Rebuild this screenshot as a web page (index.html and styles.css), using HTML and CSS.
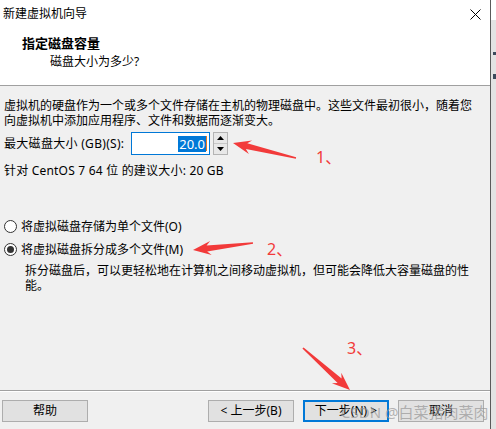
FILE: index.html
```html
<!DOCTYPE html>
<html lang="zh-CN">

<head>
    <meta charset="UTF-8">
    <title>新建虚拟机向导</title>
    <link rel="stylesheet" href="styles.css">
</head>

<body>
    <div class="window">
        <div class="dialog">
            <div class="header">
                <div class="titlebar">
                    <span>新建虚拟机向导</span>
                    <svg class="close" width="11" height="11" viewBox="0 0 11 11">
                        <path d="M0.5 0.5 L10.5 10.5 M10.5 0.5 L0.5 10.5" stroke="#000" stroke-width="1" fill="none"/>
                    </svg>
                </div>
                <div class="head-title">指定磁盘容量</div>
                <div class="head-sub">磁盘大小为多少?</div>
            </div>

            <div class="content">
                <p class="intro">虚拟机的硬盘作为一个或多个文件存储在主机的物理磁盘中。这些文件最初很小，随着您<br>向虚拟机中添加应用程序、文件和数据而逐渐变大。</p>

                <div class="size-row">
                    <label class="size-label">最大磁盘大小 (GB)(S):</label>
                    <div class="spin-input"><span class="sel">20.0</span><span class="caret"></span></div>
                    <div class="spin-btns">
                        <span class="spin-btn"><svg width="7" height="4" viewBox="0 0 7 4"><path d="M0 4 L3.5 0 L7 4 Z" fill="#000"/></svg></span>
                        <span class="spin-btn"><svg width="7" height="4" viewBox="0 0 7 4"><path d="M0 0 L3.5 4 L7 0 Z" fill="#000"/></svg></span>
                    </div>
                </div>

                <p class="hint">针对 CentOS 7 64 位 的建议大小: 20 GB</p>

                <div class="radio radio-first"><span class="circle"></span>将虚拟磁盘存储为单个文件(O)</div>
                <div class="radio radio-second"><span class="circle on"></span>将虚拟磁盘拆分成多个文件(M)</div>

                <p class="desc">拆分磁盘后，可以更轻松地在计算机之间移动虚拟机，但可能会降低大容量磁盘的性<br>能。</p>
            </div>

            <div class="footer">
                <button class="btn">帮助</button>
                <div class="spacer"></div>
                <button class="btn">&lt; 上一步(B)</button>
                <button class="btn btn-default">下一步(N) &gt;</button>
                <button class="btn">取消</button>
            </div>
        </div>
        <div class="edge">
            <div class="edge-top"></div>
            <div class="edge-mark"></div>
            <div class="edge-mark edge-mark-2"></div>
        </div>
    </div>

    <!-- red annotations drawn over the screenshot -->
    <svg class="marks" width="496" height="429" viewBox="0 0 496 429">
        <polygon points="233,143 252.1,140.4 247.3,143.3 296.1,157.3 295.9,158.7 245.9,149.1 248.9,154" fill="#f23a3a"/>
        <polygon points="193,250 210.1,240.9 206.6,245.4 252.9,242.3 253.1,243.7 207.2,251.4 211.7,254.9" fill="#f23a3a"/>
        <polygon points="350,390 341.3,372.8 341.6,378.5 303.6,347.4 302.4,348.6 337.6,382.9 331.9,383.2" fill="#f23a3a"/>
    </svg>
    <span class="num num-1">1、</span>
    <span class="num num-2">2、</span>
    <span class="num num-3">3、</span>
    <span class="watermark">CSDN @白菜猪肉菜肉</span>
</body>

</html>
```

FILE: styles.css
```css
body {
    margin: 0;
    width: 496px;
    height: 429px;
    overflow: hidden;
    position: relative;
    font-family: "Noto Sans", "Noto Sans CJK SC", sans-serif;
    font-size: 12px;
    color: #000;
    background-color: #f0f0f0;
}

.window {
    display: flex;
    height: 429px;
}

.dialog {
    width: 490px;
    border-right: 1px solid #5a5a5a;
    display: flex;
    flex-direction: column;
    background-color: #f0f0f0;
}

.header {
    height: 85px;
    background-color: #fff;
    border-bottom: 1px solid #a0a0a0;
}

.titlebar {
    display: flex;
    justify-content: space-between;
    align-items: center;
    height: 28px;
    padding: 0 9px 0 3px;
    line-height: 16px;
}

.head-title {
    font-weight: bold;
    font-size: 13px;
    line-height: 16px;
    margin: 7px 0 0 22px;
}

.head-sub {
    line-height: 16px;
    margin: 3px 0 0 50px;
}

.content {
    flex: 1;
    padding-left: 4px;
}

.intro {
    margin: 12px 0 0;
    line-height: 15px;
    white-space: nowrap;
}

.size-row {
    display: flex;
    align-items: center;
    height: 23px;
    margin-top: 4px;
}

.size-label {
    width: 127px;
    flex: none;
    line-height: 15px;
    letter-spacing: 0.3px;
}

.spin-input {
    width: 79px;
    height: 23px;
    box-sizing: border-box;
    border: 1px solid #0078d7;
    background-color: #fff;
    display: flex;
    justify-content: flex-end;
    align-items: center;
    padding-right: 2px;
}

.sel {
    background-color: #0078d7;
    color: #fff;
    font-size: 13px;
    line-height: 16px;
    padding: 0 1px;
}

.caret {
    width: 1px;
    height: 15px;
    background-color: #e8771e;
}

.spin-btns {
    margin-left: 3px;
    width: 15px;
    height: 23px;
    box-sizing: border-box;
    border: 1px solid #b4b4b4;
    display: flex;
    flex-direction: column;
    background-color: #e8e8e8;
}

.spin-btn {
    flex: 1;
    display: grid;
    place-items: center;
}

.spin-btn + .spin-btn {
    border-top: 1px solid #c8c8c8;
}

.spin-btn svg {
    display: block;
}

.hint {
    margin: 8px 0 0;
    line-height: 15px;
    letter-spacing: 0.2px;
}

.radio {
    display: flex;
    align-items: center;
    gap: 4px;
    height: 20px;
}

.radio-first {
    margin-top: 38px;
}

.radio-second {
    margin-top: 3px;
}

.circle {
    width: 13px;
    height: 13px;
    box-sizing: border-box;
    border: 1px solid #333;
    border-radius: 50%;
    background-color: #fff;
    flex: none;
    display: grid;
    place-items: center;
}

.circle.on::after {
    content: "";
    width: 7px;
    height: 7px;
    border-radius: 50%;
    background-color: #333;
}

.desc {
    margin: 4px 0 0 21px;
    line-height: 15px;
    white-space: nowrap;
}

.footer {
    height: 39px;
    box-sizing: border-box;
    border-top: 1px solid #a0a0a0;
    box-shadow: inset 0 1px #fff;
    display: flex;
    align-items: flex-start;
    gap: 9px;
    padding: 9px 6px 0 2px;
}

.spacer {
    flex: 1;
}

.btn {
    width: 86px;
    height: 22px;
    box-sizing: border-box;
    border: 1px solid #adadad;
    background-color: #e1e1e1;
    font: inherit;
    color: #000;
    padding: 0;
    line-height: 18px;
}

.btn-default {
    border: 2px solid #0078d7;
}

.edge {
    flex: 1;
    background-color: #e3e3e3;
}

.edge-top {
    height: 20px;
    background-color: #fff;
}

.edge-mark {
    width: 3px;
    height: 3px;
    margin: 32px 0 0 2px;
    background-color: #3c4a5c;
}

.edge-mark-2 {
    height: 5px;
    margin-top: 19px;
}

.marks {
    position: absolute;
    top: 0;
    left: 0;
    pointer-events: none;
}

.num {
    position: absolute;
    color: #f23a3a;
    font-size: 16px;
    line-height: 18px;
}

.num-1 {
    left: 316px;
    top: 148px;
}

.num-2 {
    left: 267px;
    top: 240px;
}

.num-3 {
    left: 347px;
    top: 339px;
}

.watermark {
    position: absolute;
    left: 341px;
    top: 402px;
    font-size: 15px;
    line-height: 20px;
    color: rgba(150, 150, 150, 0.7);
    white-space: nowrap;
}
```
